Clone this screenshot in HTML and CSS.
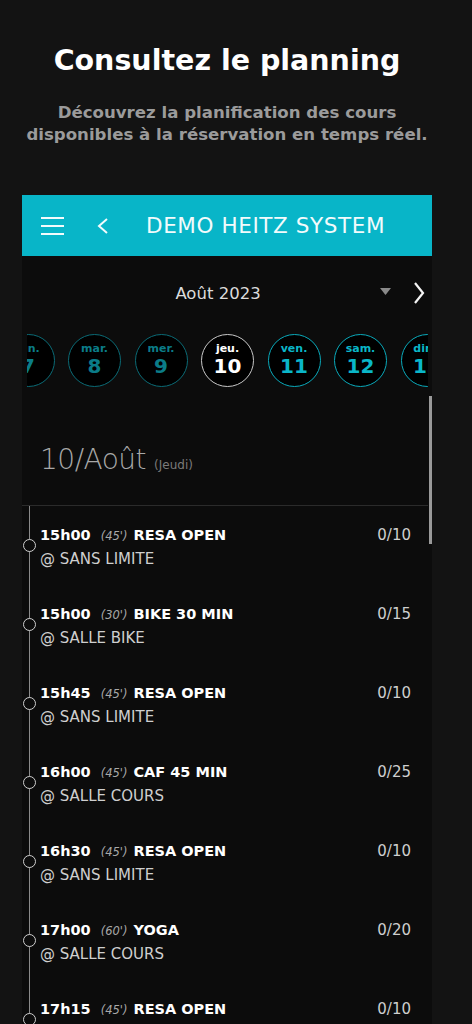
FILE: index.html
```html
<!DOCTYPE html>
<html lang="fr">
<head>
<meta charset="utf-8">
<title>Consultez le planning</title>
<link rel="stylesheet" href="styles.css">
</head>
<body>
<section class="hero">
  <h1 class="hero-title">Consultez le planning</h1>
  <p class="hero-sub">Découvrez la planification des cours<br>disponibles à la réservation en temps réel.</p>
</section>
<main class="phone">
  <header class="topbar">
    <svg class="icon-menu" width="23" height="18" viewBox="0 0 23 18"><path d="M0 1h23M0 9h23M0 17h23" stroke="#f2fbfc" stroke-width="2" fill="none"/></svg>
    <svg class="icon-back" width="12" height="16" viewBox="0 0 12 16"><path d="M10 1L2 8l8 7" stroke="#f2fbfc" stroke-width="2" fill="none"/></svg>
    <span class="topbar-title">DEMO HEITZ SYSTEM</span>
  </header>
  <div class="month-row">
    <span class="spacer"></span>
    <span class="month">Août 2023</span>
    <span class="month-tools">
      <svg class="caret" width="11" height="7" viewBox="0 0 11 7"><path d="M0 0h11L5.5 7z" fill="#8a8a8a"/></svg>
      <svg class="chev" width="12" height="22" viewBox="0 0 12 22"><path d="M2 1l8 10-8 10" stroke="#f4f4f4" stroke-width="2.2" fill="none"/></svg>
    </span>
  </div>
  <div class="days-clip">
    <div class="days">
      <div class="day past"><span class="dn">lun.</span><span class="dd">7</span></div>
      <div class="day past"><span class="dn">mar.</span><span class="dd">8</span></div>
      <div class="day past"><span class="dn">mer.</span><span class="dd">9</span></div>
      <div class="day today"><span class="dn">jeu.</span><span class="dd">10</span></div>
      <div class="day future"><span class="dn">ven.</span><span class="dd">11</span></div>
      <div class="day future"><span class="dn">sam.</span><span class="dd">12</span></div>
      <div class="day future"><span class="dn">dim.</span><span class="dd">13</span></div>
    </div>
  </div>
  <div class="scroll-area">
    <div class="scrollbar"></div>
    <div class="date-head"><span class="date-big">10/Août</span><span class="date-small">(Jeudi)</span></div>
    <div class="timeline">
      <div class="row"><span class="dot"></span><div class="l1"><b class="t">15h00</b><i class="dur">(45')</i><b class="name">RESA OPEN</b><span class="cnt">0/10</span></div><div class="l2">@ SANS LIMITE</div></div>
      <div class="row"><span class="dot"></span><div class="l1"><b class="t">15h00</b><i class="dur">(30')</i><b class="name">BIKE 30 MIN</b><span class="cnt">0/15</span></div><div class="l2">@ SALLE BIKE</div></div>
      <div class="row"><span class="dot"></span><div class="l1"><b class="t">15h45</b><i class="dur">(45')</i><b class="name">RESA OPEN</b><span class="cnt">0/10</span></div><div class="l2">@ SANS LIMITE</div></div>
      <div class="row"><span class="dot"></span><div class="l1"><b class="t">16h00</b><i class="dur">(45')</i><b class="name">CAF 45 MIN</b><span class="cnt">0/25</span></div><div class="l2">@ SALLE COURS</div></div>
      <div class="row"><span class="dot"></span><div class="l1"><b class="t">16h30</b><i class="dur">(45')</i><b class="name">RESA OPEN</b><span class="cnt">0/10</span></div><div class="l2">@ SANS LIMITE</div></div>
      <div class="row"><span class="dot"></span><div class="l1"><b class="t">17h00</b><i class="dur">(60')</i><b class="name">YOGA</b><span class="cnt">0/20</span></div><div class="l2">@ SALLE COURS</div></div>
      <div class="row"><span class="dot"></span><div class="l1"><b class="t">17h15</b><i class="dur">(45')</i><b class="name">RESA OPEN</b><span class="cnt">0/10</span></div><div class="l2">@ SANS LIMITE</div></div>
    </div>
  </div>
</main>
</body>
</html>
```
FILE: styles.css
```css
* { box-sizing: border-box; }
html, body { margin: 0; padding: 0; }
body {
  background: #131313;
  font-family: "DejaVu Sans", "Open Sans", sans-serif;
  width: 472px;
  height: 1024px;
  overflow: hidden;
}
.hero {
  padding: 41px 18px 0 0;
  text-align: center;
}
.hero-title {
  margin: 0;
  color: #ffffff;
  font-size: 28.5px;
  font-weight: 700;
  line-height: 40px;
  letter-spacing: 0;
}
.hero-sub {
  margin: 21px 0 0;
  color: #9b9b9b;
  font-size: 16.6px;
  font-weight: 700;
  line-height: 22px;
}
.phone {
  margin: 49px 0 0 22px;
  width: 410px;
  background: #0c0c0c;
  height: 900px;
}
.topbar {
  height: 61px;
  background: #08b5c8;
  display: flex;
  align-items: center;
  padding-left: 19px;
}
.icon-menu { margin-right: 33px; }
.icon-back { margin-right: 37px; }
.topbar-title {
  color: #f2fbfc;
  font-size: 21.5px;
  font-weight: 400;
  letter-spacing: 0.6px;
}
.month-row {
  height: 74px;
  display: flex;
  align-items: center;
  padding-right: 7px;
}
.spacer { flex: 1; }
.month {
  color: #dcdcdc;
  font-size: 16.5px;
  margin-right: 11px;
}
.month-tools {
  flex: 1;
  display: flex;
  justify-content: flex-end;
  align-items: center;
}
.caret { margin-right: 22px; margin-top: -3px; }
.days-clip {
  margin: 4px 4px 0 5px;
  overflow: hidden;
}
.days {
  display: flex;
  gap: 13.5px;
  margin-left: -25.5px;
}
.day {
  flex: none;
  width: 53px;
  height: 53px;
  border-radius: 50%;
  background: #000;
  border: 1.5px solid;
  display: flex;
  flex-direction: column;
  align-items: center;
  justify-content: center;
  font-weight: 700;
  line-height: 1;
}
.dn { font-size: 11px; margin-top: -2px; }
.dd { font-size: 20px; margin-top: 2px; }
.past { border-color: #0b6b76; color: #0b7c88; }
.today { border-color: #c8c8c8; color: #ffffff; }
.future { border-color: #0aaabb; color: #0ab6c8; }
.scroll-area {
  position: relative;
}
.scrollbar {
  position: absolute;
  right: 0;
  top: 9px;
  width: 3px;
  height: 148px;
  background: #9a9a9a;
}
.date-head {
  height: 119px;
  border-bottom: 1px solid #2b2b2b;
  margin-right: 4px;
  padding: 56px 0 0 18px;
}
.date-big {
  color: #a8a8a8;
  font-size: 28px;
  font-weight: 300;
  letter-spacing: -0.5px;
}
.date-small {
  color: #7a7a7a;
  font-size: 12px;
  margin-left: 8px;
}
.timeline {
  margin-left: 7px;
  border-left: 1px solid #8a8a8a;
  padding: 18px 21px 0 10px;
}
.row {
  position: relative;
  height: 79px;
}
.dot {
  position: absolute;
  left: -17px;
  top: 15px;
  width: 13px;
  height: 13px;
  border-radius: 50%;
  border: 1.5px solid #cfcfcf;
  background: #0c0c0c;
}
.l1 {
  display: flex;
  align-items: baseline;
  line-height: 23px;
  color: #ffffff;
}
.t { font-size: 14.5px; font-weight: 700; }
.dur { font-size: 11.5px; color: #a8a8a8; margin: 0 6px 0 10px; }
.name { font-size: 14.5px; font-weight: 700; }
.cnt { margin-left: auto; font-size: 15px; color: #cfcfcf; }
.l2 {
  color: #cfcfcf;
  font-size: 15px;
  line-height: 23px;
}
```
